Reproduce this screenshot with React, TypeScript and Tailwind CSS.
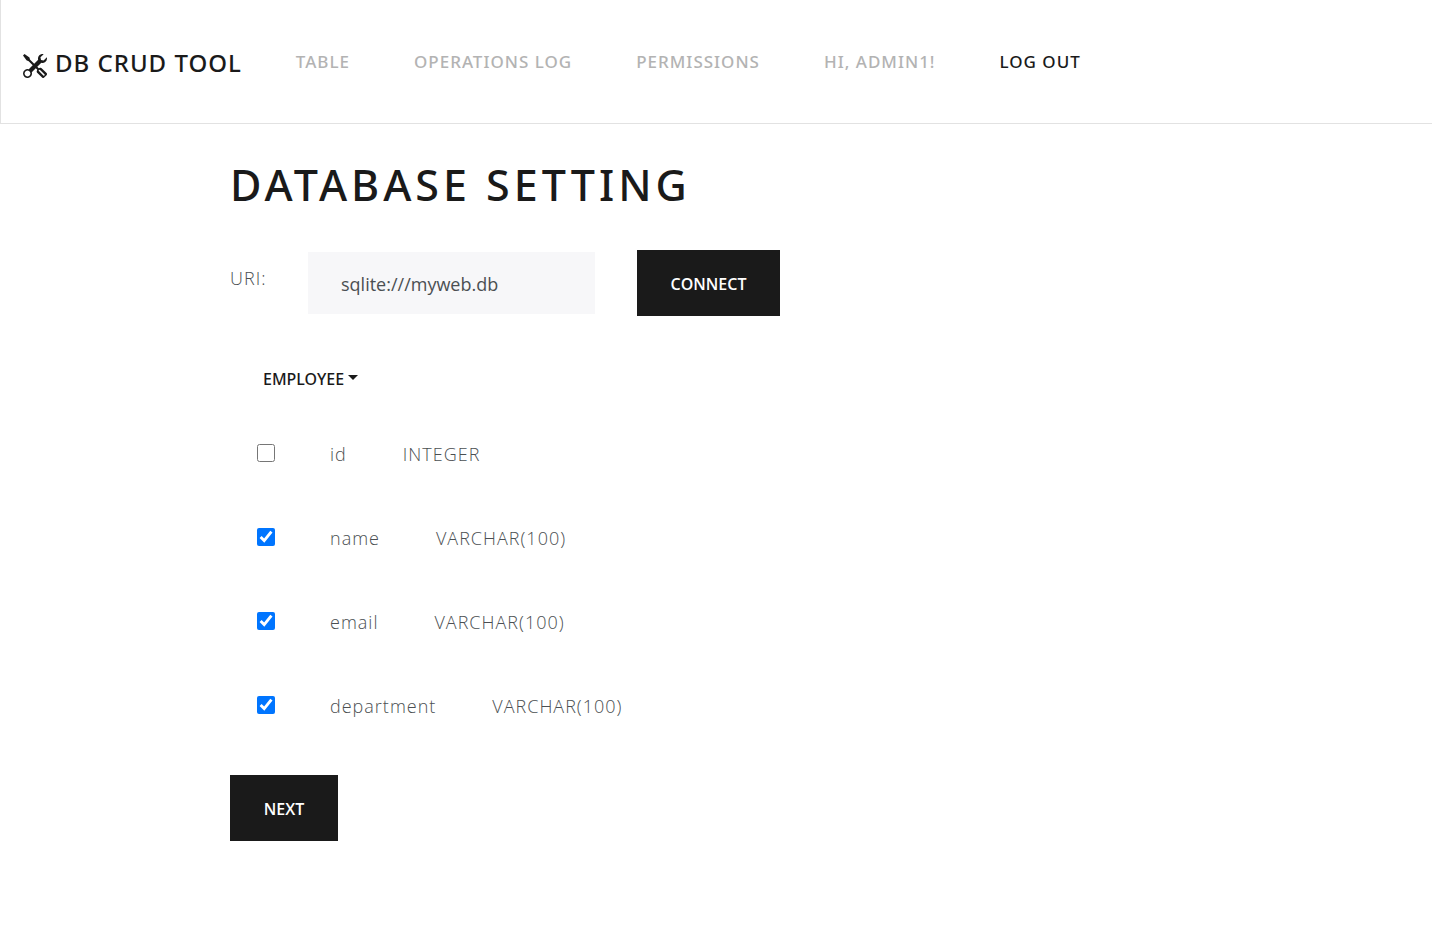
import { useState } from "react";
import { BsTools } from "react-icons/bs";

const links = ["Table", "Operations Log", "Permissions", "Hi, admin1!"];

const columns = [
  { name: "id", type: "INTEGER", checked: false },
  { name: "name", type: "VARCHAR(100)", checked: true },
  { name: "email", type: "VARCHAR(100)", checked: true },
  { name: "department", type: "VARCHAR(100)", checked: true },
];

function Navbar() {
  return (
    <header className="flex h-31 items-center border-b border-l border-[#e2e2e2] pl-[22px] font-['Noto_Sans',sans-serif]">
      <a href="#" className="flex items-center gap-2 whitespace-nowrap pt-0.5 text-2xl font-medium uppercase leading-8 tracking-[1px] text-[#1a1a1a]">
        <BsTools className="mt-1.5 size-6" aria-hidden="true" />
        DB CRUD Tool
      </a>
      <nav className="ml-[54px] flex gap-16 whitespace-nowrap text-[17px] font-medium uppercase leading-6 tracking-[1px]">
        {links.map((label) => (
          <a key={label} href="#" className="text-[#b3b3b3]">
            {label}
          </a>
        ))}
        <a href="#" className="text-[#1a1a1a]">
          Log out
        </a>
      </nav>
    </header>
  );
}

function ColumnRow({ name, type, checked }: { name: string; type: string; checked: boolean }) {
  const [on, setOn] = useState(checked);
  return (
    <li className="flex h-21 items-center pl-[27px]">
      <input
        id={`column-${name}`}
        type="checkbox"
        checked={on}
        onChange={(e) => setOn(e.target.checked)}
        className="size-[18px] accent-[#0075ff]"
      />
      <label htmlFor={`column-${name}`} className="ml-[55px] flex gap-14 pt-0.5 leading-7">
        <span>{name}</span>
        <span>{type}</span>
      </label>
    </li>
  );
}

export default function App() {
  const [uri, setUri] = useState("sqlite:///myweb.db");
  return (
    <div className="min-h-screen bg-white font-['Open_Sans','Noto_Sans',sans-serif] text-[#4b4f52]">
      <Navbar />
      <main className="mx-auto max-w-[972px] pt-8 text-lg font-light tracking-[1px]">
        <h1 className="font-['Noto_Sans',sans-serif] text-[43px] font-medium uppercase leading-[58px] tracking-[4px] text-[#1a1a1a]">
          Database Setting
        </h1>
        <form className="mt-9 flex items-center" onSubmit={(e) => e.preventDefault()}>
          <label htmlFor="uri" className="w-[78px] pb-2.5">
            URI:
          </label>
          <input
            id="uri"
            type="text"
            value={uri}
            onChange={(e) => setUri(e.target.value)}
            className="h-[62px] w-[287px] bg-[#f7f7f9] px-[33px] pt-0.5 font-normal tracking-normal"
          />
          <button type="submit" className="ml-[42px] h-[66px] w-[143px] bg-[#1a1a1a] pt-0.5 text-base font-semibold uppercase tracking-normal text-white">
            Connect
          </button>
        </form>
        <button type="button" className="mt-[30px] flex h-[65px] items-center gap-1 px-[33px] font-['Noto_Sans',sans-serif] text-base font-medium uppercase tracking-normal text-[#1a1a1a]">
          Employee
          <svg viewBox="0 0 10 5" className="mb-0.5 h-[5px] w-2.5" fill="currentColor" aria-hidden="true">
            <path d="M0 0h10L5 5z" />
          </svg>
        </button>
        <ul>
          {columns.map((column) => (
            <ColumnRow key={column.name} {...column} />
          ))}
        </ul>
        <button type="button" className="mt-7 h-[66px] w-27 bg-[#1a1a1a] pt-0.5 text-base font-semibold uppercase tracking-normal text-white">
          Next
        </button>
      </main>
    </div>
  );
}
